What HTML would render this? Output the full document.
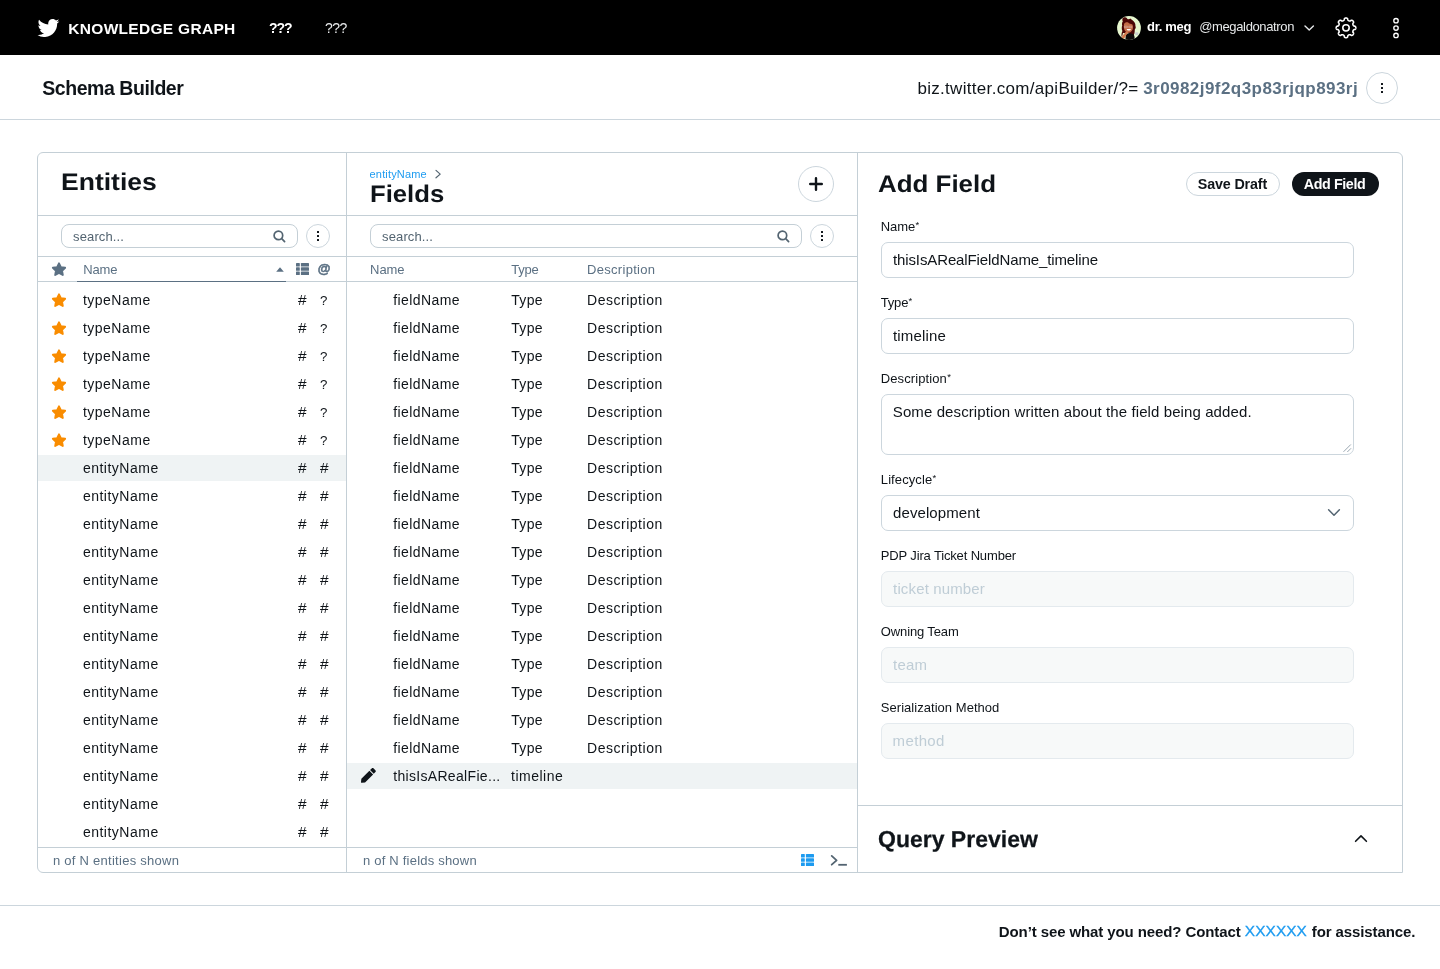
<!DOCTYPE html>
<html lang="en">
<head>
<meta charset="utf-8">
<title>Schema Builder</title>
<style>
*{box-sizing:border-box;margin:0;padding:0}
html,body{width:1440px;height:969px;overflow:hidden;background:#fff}
body{font-family:"Liberation Sans",sans-serif;color:#0f1419;position:relative}
#root{position:absolute;left:0;top:0;width:1440px;height:969px;will-change:transform}
.abs{position:absolute}
.t{position:absolute;white-space:nowrap;display:block}
#topbar{position:absolute;left:0;top:0;width:1440px;height:55px;background:#000}
#sub{position:absolute;left:0;top:55px;width:1440px;height:65px;background:#fff;border-bottom:1px solid #ccd6dd}
#panel{position:absolute;left:37px;top:152px;width:1366px;height:721px;border:1px solid #c4cfd6;border-radius:6px 6px 0 6px;background:#fff}
.hl{position:absolute;height:1px;background:#c4cfd6}
.vl{position:absolute;width:1px;background:#c4cfd6}
.hi{position:absolute;background:#eff3f4}
.inp{position:absolute;left:881px;width:473px;height:36px;border:1px solid #ccd6dd;border-radius:7px;background:#fff}
.inp.dis{background:#f7f9f9;border-color:#e4eaee}
.srch{position:absolute;height:24px;border:1px solid #c4cfd6;border-radius:8px;background:#fff}
#footer{position:absolute;left:0;top:905px;width:1440px;height:64px;border-top:1px solid #ccd6dd;background:#fff}
</style>
</head>
<body>
<div id="root">

<div id="topbar"></div>
<svg class="abs" style="left:37.2px;top:18.6px" width="22.4" height="18.5" viewBox="0.36 2.75 23.3 18.95" preserveAspectRatio="none"><path fill="#fff" d="M23.643 4.937c-.835.37-1.732.62-2.675.733.962-.576 1.7-1.49 2.048-2.578-.9.534-1.897.922-2.958 1.13-.85-.904-2.06-1.47-3.4-1.47-2.572 0-4.658 2.086-4.658 4.66 0 .364.042.718.12 1.06-3.873-.195-7.304-2.05-9.602-4.868-.4.69-.63 1.49-.63 2.342 0 1.616.823 3.043 2.072 3.878-.764-.025-1.482-.234-2.11-.583v.06c0 2.257 1.605 4.14 3.737 4.568-.392.106-.803.162-1.227.162-.3 0-.593-.028-.877-.082.593 1.85 2.313 3.198 4.352 3.234-1.595 1.25-3.604 1.995-5.786 1.995-.376 0-.747-.022-1.112-.065 2.062 1.323 4.51 2.093 7.14 2.093 8.57 0 13.255-7.098 13.255-13.254 0-.2-.005-.402-.014-.602.91-.658 1.7-1.477 2.323-2.41z"/></svg>
<span class="t" id="kg" style="left:68.30px;top:20.68px;font-size:15.5px;line-height:15.5px;font-weight:700;color:#fff;letter-spacing:0.3px;">KNOWLEDGE GRAPH</span>
<span class="t" id="q1" style="left:269.00px;top:21.35px;font-size:14px;line-height:14px;font-weight:700;color:#fff;letter-spacing:-1.0px;">???</span>
<span class="t" id="q2" style="left:325.00px;top:21.35px;font-size:14px;line-height:14px;font-weight:400;color:#e7e9ea;letter-spacing:-0.5px;">???</span>
<svg class="abs" style="left:1117px;top:16px" width="24" height="24" viewBox="0 0 24 24">
<defs><clipPath id="avc"><circle cx="12" cy="12" r="11.9"/></clipPath></defs>
<g clip-path="url(#avc)">
<rect width="24" height="24" fill="#e6f7cf"/>
<path d="M5.4 3.2 C5.2 1.6 6.8 0.9 8 1.3 C9.2 1.2 9.9 2.2 10.4 3 C11.6 3.4 12.6 3.2 13.4 2.6 C14.2 3.6 15.6 4.2 16.6 5.2 C18.2 6.6 18.6 8.6 18.4 10 C19.2 11.2 18.6 12.6 17.8 13.4 C17.8 15 17.6 16.4 17.4 17.6 L16.6 19.6 L12.2 19.6 L12 17 L6 17 C5.6 18.4 5.4 20 4.8 21 C4 19 4.8 16.6 5.4 15 C4.6 13.4 4.6 11 5.2 9.4 C4.8 8 5 6.4 5.8 5.4 C5.4 4.8 5.3 4 5.4 3.2Z" fill="#4a0606"/>
<path d="M7 8.2 C7.6 6.6 9.6 6 11.2 6.6 C12 7.6 14 8 15.4 8.4 C16.2 10 16.2 12.4 15.4 14 C14.4 15.8 12.6 16.8 11 16.6 C9 16.4 7.4 14.8 7 12.6 C6.8 11 6.8 9.4 7 8.2Z" fill="#c26c47"/>
<path d="M9.6 13 L13.9 13 C13.7 14.2 12.8 14.6 11.8 14.6 C10.8 14.6 9.8 14.2 9.6 13Z" fill="#fff"/>
<path d="M7.4 10.2 h3 v1.5 h-3z M11.8 10.2 h3 v1.5 h-3z" fill="none" stroke="#d9b7b0" stroke-width="0.55"/>
<path d="M8.4 24 L8.8 19 C9.6 17.6 11 17 12.4 17.2 L16.4 18 C17.4 19.4 17.8 21.6 17.6 24Z" fill="#0c0a09"/>
<path d="M3.6 22.4 C5 20.4 6.6 18.4 8 16.8 C8.6 15.8 9.8 15.4 10.8 15.6 L11.4 16.8 C10.4 17.4 9.6 18.4 9 19.6 C8.4 20.8 7.4 22.4 6.4 23.4Z" fill="#d27a4e"/>
<path d="M18.4 16.2 l3 0.4 l-0.4 2.6 l-2.8 -0.4z" fill="#c9cfd0"/>
</g></svg>
<span class="t" id="drmeg" style="left:1147.00px;top:20.20px;font-size:13px;line-height:13px;font-weight:700;color:#fff;letter-spacing:-0.3px;">dr. meg</span>
<span class="t" id="handle" style="left:1199.20px;top:20.20px;font-size:13px;line-height:13px;font-weight:400;color:#e7e9ea;letter-spacing:-0.36px;">@megaldonatron</span>
<svg class="abs" style="left:1303px;top:23px" width="12" height="10" viewBox="0 0 12 10" fill="none" stroke="#e7e9ea" stroke-width="1.4" stroke-linecap="round" stroke-linejoin="round"><path d="M2 3 L6.2 7 L10.4 3"/></svg>
<svg class="abs" style="left:1334px;top:16px" width="24" height="24" viewBox="0 0 24 24" fill="none" stroke="#fff" stroke-width="1.55" stroke-linejoin="round"><path d="M12.00 2.00 L12.17 2.01 L12.34 2.03 L12.51 2.06 L12.68 2.10 L12.85 2.16 L13.01 2.24 L13.17 2.33 L13.32 2.44 L13.47 2.58 L13.60 2.75 L13.71 3.04 L13.73 3.71 L13.83 3.93 L13.94 4.09 L14.05 4.22 L14.16 4.33 L14.27 4.43 L14.38 4.52 L14.49 4.61 L14.61 4.68 L14.73 4.74 L14.85 4.80 L14.97 4.85 L15.10 4.90 L15.23 4.93 L15.36 4.96 L15.50 4.99 L15.64 5.00 L15.79 5.01 L15.95 5.01 L16.12 4.99 L16.31 4.95 L16.53 4.87 L17.02 4.41 L17.30 4.28 L17.52 4.25 L17.72 4.26 L17.90 4.29 L18.08 4.34 L18.25 4.40 L18.41 4.48 L18.56 4.56 L18.70 4.66 L18.84 4.77 L18.97 4.88 L19.08 5.01 L19.19 5.15 L19.29 5.29 L19.37 5.44 L19.45 5.60 L19.51 5.77 L19.56 5.95 L19.59 6.13 L19.60 6.33 L19.57 6.55 L19.44 6.83 L18.98 7.32 L18.90 7.54 L18.86 7.73 L18.84 7.90 L18.84 8.06 L18.85 8.21 L18.86 8.35 L18.89 8.49 L18.92 8.62 L18.95 8.75 L19.00 8.88 L19.05 9.00 L19.11 9.12 L19.17 9.24 L19.24 9.36 L19.33 9.47 L19.42 9.58 L19.52 9.69 L19.63 9.80 L19.76 9.91 L19.92 10.02 L20.14 10.12 L20.81 10.14 L21.10 10.25 L21.27 10.38 L21.41 10.53 L21.52 10.68 L21.61 10.84 L21.69 11.00 L21.75 11.17 L21.79 11.34 L21.82 11.51 L21.84 11.68 L21.85 11.85 L21.84 12.02 L21.82 12.19 L21.79 12.36 L21.75 12.53 L21.69 12.70 L21.61 12.86 L21.52 13.02 L21.41 13.17 L21.27 13.32 L21.10 13.45 L20.81 13.56 L20.14 13.58 L19.92 13.68 L19.76 13.79 L19.63 13.90 L19.52 14.01 L19.42 14.12 L19.33 14.23 L19.24 14.34 L19.17 14.46 L19.11 14.58 L19.05 14.70 L19.00 14.82 L18.95 14.95 L18.92 15.08 L18.89 15.21 L18.86 15.35 L18.85 15.49 L18.84 15.64 L18.84 15.80 L18.86 15.97 L18.90 16.16 L18.98 16.38 L19.44 16.87 L19.57 17.15 L19.60 17.37 L19.59 17.57 L19.56 17.75 L19.51 17.93 L19.45 18.10 L19.37 18.26 L19.29 18.41 L19.19 18.55 L19.08 18.69 L18.97 18.82 L18.84 18.93 L18.70 19.04 L18.56 19.14 L18.41 19.22 L18.25 19.30 L18.08 19.36 L17.90 19.41 L17.72 19.44 L17.52 19.45 L17.30 19.42 L17.02 19.29 L16.53 18.83 L16.31 18.75 L16.12 18.71 L15.95 18.69 L15.79 18.69 L15.64 18.70 L15.50 18.71 L15.36 18.74 L15.23 18.77 L15.10 18.80 L14.97 18.85 L14.85 18.90 L14.73 18.96 L14.61 19.02 L14.49 19.09 L14.38 19.18 L14.27 19.27 L14.16 19.37 L14.05 19.48 L13.94 19.61 L13.83 19.77 L13.73 19.99 L13.71 20.66 L13.60 20.95 L13.47 21.12 L13.32 21.26 L13.17 21.37 L13.01 21.46 L12.85 21.54 L12.68 21.60 L12.51 21.64 L12.34 21.67 L12.17 21.69 L12.00 21.70 L11.83 21.69 L11.66 21.67 L11.49 21.64 L11.32 21.60 L11.15 21.54 L10.99 21.46 L10.83 21.37 L10.68 21.26 L10.53 21.12 L10.40 20.95 L10.29 20.66 L10.27 19.99 L10.17 19.77 L10.06 19.61 L9.95 19.48 L9.84 19.37 L9.73 19.27 L9.62 19.18 L9.51 19.09 L9.39 19.02 L9.27 18.96 L9.15 18.90 L9.03 18.85 L8.90 18.80 L8.77 18.77 L8.64 18.74 L8.50 18.71 L8.36 18.70 L8.21 18.69 L8.05 18.69 L7.88 18.71 L7.69 18.75 L7.47 18.83 L6.98 19.29 L6.70 19.42 L6.48 19.45 L6.28 19.44 L6.10 19.41 L5.92 19.36 L5.75 19.30 L5.59 19.22 L5.44 19.14 L5.30 19.04 L5.16 18.93 L5.03 18.82 L4.92 18.69 L4.81 18.55 L4.71 18.41 L4.63 18.26 L4.55 18.10 L4.49 17.93 L4.44 17.75 L4.41 17.57 L4.40 17.37 L4.43 17.15 L4.56 16.87 L5.02 16.38 L5.10 16.16 L5.14 15.97 L5.16 15.80 L5.16 15.64 L5.15 15.49 L5.14 15.35 L5.11 15.21 L5.08 15.08 L5.05 14.95 L5.00 14.82 L4.95 14.70 L4.89 14.58 L4.83 14.46 L4.76 14.34 L4.67 14.23 L4.58 14.12 L4.48 14.01 L4.37 13.90 L4.24 13.79 L4.08 13.68 L3.86 13.58 L3.19 13.56 L2.90 13.45 L2.73 13.32 L2.59 13.17 L2.48 13.02 L2.39 12.86 L2.31 12.70 L2.25 12.53 L2.21 12.36 L2.18 12.19 L2.16 12.02 L2.15 11.85 L2.16 11.68 L2.18 11.51 L2.21 11.34 L2.25 11.17 L2.31 11.00 L2.39 10.84 L2.48 10.68 L2.59 10.53 L2.73 10.38 L2.90 10.25 L3.19 10.14 L3.86 10.12 L4.08 10.02 L4.24 9.91 L4.37 9.80 L4.48 9.69 L4.58 9.58 L4.67 9.47 L4.76 9.36 L4.83 9.24 L4.89 9.12 L4.95 9.00 L5.00 8.88 L5.05 8.75 L5.08 8.62 L5.11 8.49 L5.14 8.35 L5.15 8.21 L5.16 8.06 L5.16 7.90 L5.14 7.73 L5.10 7.54 L5.02 7.32 L4.56 6.83 L4.43 6.55 L4.40 6.33 L4.41 6.13 L4.44 5.95 L4.49 5.77 L4.55 5.60 L4.63 5.44 L4.71 5.29 L4.81 5.15 L4.92 5.01 L5.03 4.88 L5.16 4.77 L5.30 4.66 L5.44 4.56 L5.59 4.48 L5.75 4.40 L5.92 4.34 L6.10 4.29 L6.28 4.26 L6.48 4.25 L6.70 4.28 L6.98 4.41 L7.47 4.87 L7.69 4.95 L7.88 4.99 L8.05 5.01 L8.21 5.01 L8.36 5.00 L8.50 4.99 L8.64 4.96 L8.77 4.93 L8.90 4.90 L9.03 4.85 L9.15 4.80 L9.27 4.74 L9.39 4.68 L9.51 4.61 L9.62 4.52 L9.73 4.43 L9.84 4.33 L9.95 4.22 L10.06 4.09 L10.17 3.93 L10.27 3.71 L10.29 3.04 L10.40 2.75 L10.53 2.58 L10.68 2.44 L10.83 2.33 L10.99 2.24 L11.15 2.16 L11.32 2.10 L11.49 2.06 L11.66 2.03 L11.83 2.01Z"/><circle cx="12" cy="11.85" r="3.2"/></svg>
<svg class="abs" style="left:1391px;top:16px" width="10" height="24" viewBox="0 0 10 24" fill="none" stroke="#fff" stroke-width="1.35"><circle cx="5" cy="4.7" r="2.2"/><circle cx="5" cy="12" r="2.2"/><circle cx="5" cy="19.4" r="2.2"/></svg>
<div id="sub"></div>
<span class="t" id="sb" style="left:42.20px;top:78.89px;font-size:19.5px;line-height:19.5px;font-weight:700;color:#0f1419;letter-spacing:-0.44px;">Schema Builder</span>
<span class="t" id="url" style="left:917.40px;top:79.61px;font-size:17px;line-height:17px;font-weight:400;color:#0f1419;letter-spacing:0.31px;">biz.twitter.com/apiBuilder/?=</span>
<span class="t" id="hash" style="left:1143.20px;top:79.61px;font-size:17px;line-height:17px;font-weight:700;color:#5b7083;letter-spacing:0.45px;">3r0982j9f2q3p83rjqp893rj</span>
<div class="abs" style="left:1366.0px;top:72.0px;width:32px;height:32px;border:1px solid #ccd6dd;border-radius:50%"></div><svg class="abs" style="left:1380px;top:82px" width="4" height="12" viewBox="0 0 4 12" fill="#0f1419"><rect x="1" y="1" width="2" height="2" rx="0.3"/><rect x="1" y="5" width="2" height="2" rx="0.3"/><rect x="1" y="9" width="2" height="2" rx="0.3"/></svg>
<div id="panel"></div>
<div class="vl" style="left:346px;top:153px;height:719px"></div>
<div class="vl" style="left:857px;top:153px;height:719px"></div>
<div class="hl" style="left:38px;top:215px;width:819px"></div>
<div class="hl" style="left:38px;top:256px;width:819px"></div>
<div class="hl" style="left:38px;top:281px;width:819px"></div>
<div class="hl" style="left:38px;top:847px;width:819px"></div>
<div class="hl" style="left:858px;top:805px;width:544px"></div>
<div class="hl" style="left:77px;top:281px;width:209px;background:#5b7083"></div>
<span class="t" id="ent" style="left:61.30px;top:169.88px;font-size:24px;line-height:24px;font-weight:700;color:#0f1419;letter-spacing:0px;transform-origin:0 20.32px;transform:scaleX(1.105) rotate(0.03deg)">Entities</span>
<div class="srch" style="left:61px;top:224px;width:237px"></div>
<span class="t" id="s1" style="left:73.00px;top:229.50px;font-size:13px;line-height:13px;font-weight:400;color:#536471;letter-spacing:0.14px;">search...</span>
<svg class="abs" style="left:273.3px;top:229.8px" width="13" height="13" viewBox="0 0 13 13" fill="none" stroke="#536471" stroke-width="1.7" stroke-linecap="round"><circle cx="5.4" cy="5.4" r="4.3"/><path d="M8.7 8.7 L11.6 11.6"/></svg>
<div class="abs" style="left:306.0px;top:224.0px;width:24px;height:24px;border:1px solid #ccd6dd;border-radius:50%"></div><svg class="abs" style="left:316px;top:230px" width="4" height="12" viewBox="0 0 4 12" fill="#0f1419"><rect x="1" y="1" width="2" height="2" rx="0.3"/><rect x="1" y="5" width="2" height="2" rx="0.3"/><rect x="1" y="9" width="2" height="2" rx="0.3"/></svg>
<svg class="abs" style="left:50.2px;top:260.2px" width="18" height="18" viewBox="-9 -9 18 18"><path d="M0.00 -5.70 L1.88 -1.84 L6.13 -1.24 L3.04 1.74 L3.79 5.97 L0.00 3.95 L-3.79 5.97 L-3.04 1.74 L-6.13 -1.24 L-1.88 -1.84Z" fill="#5b7083" stroke="#5b7083" stroke-width="1.9" stroke-linejoin="round"/></svg>
<span class="t" id="hn1" style="left:83.20px;top:263.00px;font-size:13px;line-height:13px;font-weight:400;color:#5b7083;letter-spacing:-0.1px;">Name</span>
<svg class="abs" style="left:276px;top:267px" width="8" height="5" viewBox="0 0 8 5"><path d="M0.2 4.7 L4 0.3 L7.8 4.7Z" fill="#5b7083"/></svg>
<svg class="abs" style="left:296px;top:263px" width="13" height="12" viewBox="0 0 13 12" fill="#5b7083"><rect x="0" y="0" width="3.8" height="3.5" rx="0.6"/><rect x="4.9" y="0" width="8.1" height="3.5" rx="0.6"/><rect x="0" y="4.25" width="3.8" height="3.5" rx="0.6"/><rect x="4.9" y="4.25" width="8.1" height="3.5" rx="0.6"/><rect x="0" y="8.5" width="3.8" height="3.5" rx="0.6"/><rect x="4.9" y="8.5" width="8.1" height="3.5" rx="0.6"/></svg>
<span class="t" id="at" style="left:317.70px;top:262.20px;font-size:13px;line-height:13px;font-weight:700;color:#5b7083;letter-spacing:0px;-webkit-text-stroke:0.55px #5b7083">@</span>
<div class="hi" style="left:38px;top:455px;width:308px;height:26px"></div>
<svg class="abs" style="left:50px;top:290.9px" width="18" height="18" viewBox="-9 -9 18 18"><path d="M0.00 -5.70 L1.88 -1.84 L6.13 -1.24 L3.04 1.74 L3.79 5.97 L0.00 3.95 L-3.79 5.97 L-3.04 1.74 L-6.13 -1.24 L-1.88 -1.84Z" fill="#f98c00" stroke="#f98c00" stroke-width="1.9" stroke-linejoin="round"/></svg>
<span class="t" id="e0" style="left:82.90px;top:292.95px;font-size:14px;line-height:14px;font-weight:400;color:#0f1419;letter-spacing:0.5px;">typeName</span>
<span class="t" id="eh0" style="left:298.10px;top:292.95px;font-size:14px;line-height:14px;font-weight:400;color:#0f1419;letter-spacing:0px;transform-origin:0 0;transform:scaleX(1.1)">#</span>
<span class="t" id="eq0" style="left:319.90px;top:293.54px;font-size:13.3px;line-height:13.3px;font-weight:400;color:#0f1419;letter-spacing:0px;">?</span>
<svg class="abs" style="left:50px;top:318.9px" width="18" height="18" viewBox="-9 -9 18 18"><path d="M0.00 -5.70 L1.88 -1.84 L6.13 -1.24 L3.04 1.74 L3.79 5.97 L0.00 3.95 L-3.79 5.97 L-3.04 1.74 L-6.13 -1.24 L-1.88 -1.84Z" fill="#f98c00" stroke="#f98c00" stroke-width="1.9" stroke-linejoin="round"/></svg>
<span class="t" id="e1" style="left:82.90px;top:320.95px;font-size:14px;line-height:14px;font-weight:400;color:#0f1419;letter-spacing:0.5px;">typeName</span>
<span class="t" id="eh1" style="left:298.10px;top:320.95px;font-size:14px;line-height:14px;font-weight:400;color:#0f1419;letter-spacing:0px;transform-origin:0 0;transform:scaleX(1.1)">#</span>
<span class="t" id="eq1" style="left:319.90px;top:321.54px;font-size:13.3px;line-height:13.3px;font-weight:400;color:#0f1419;letter-spacing:0px;">?</span>
<svg class="abs" style="left:50px;top:346.9px" width="18" height="18" viewBox="-9 -9 18 18"><path d="M0.00 -5.70 L1.88 -1.84 L6.13 -1.24 L3.04 1.74 L3.79 5.97 L0.00 3.95 L-3.79 5.97 L-3.04 1.74 L-6.13 -1.24 L-1.88 -1.84Z" fill="#f98c00" stroke="#f98c00" stroke-width="1.9" stroke-linejoin="round"/></svg>
<span class="t" id="e2" style="left:82.90px;top:348.95px;font-size:14px;line-height:14px;font-weight:400;color:#0f1419;letter-spacing:0.5px;">typeName</span>
<span class="t" id="eh2" style="left:298.10px;top:348.95px;font-size:14px;line-height:14px;font-weight:400;color:#0f1419;letter-spacing:0px;transform-origin:0 0;transform:scaleX(1.1)">#</span>
<span class="t" id="eq2" style="left:319.90px;top:349.54px;font-size:13.3px;line-height:13.3px;font-weight:400;color:#0f1419;letter-spacing:0px;">?</span>
<svg class="abs" style="left:50px;top:374.9px" width="18" height="18" viewBox="-9 -9 18 18"><path d="M0.00 -5.70 L1.88 -1.84 L6.13 -1.24 L3.04 1.74 L3.79 5.97 L0.00 3.95 L-3.79 5.97 L-3.04 1.74 L-6.13 -1.24 L-1.88 -1.84Z" fill="#f98c00" stroke="#f98c00" stroke-width="1.9" stroke-linejoin="round"/></svg>
<span class="t" id="e3" style="left:82.90px;top:376.95px;font-size:14px;line-height:14px;font-weight:400;color:#0f1419;letter-spacing:0.5px;">typeName</span>
<span class="t" id="eh3" style="left:298.10px;top:376.95px;font-size:14px;line-height:14px;font-weight:400;color:#0f1419;letter-spacing:0px;transform-origin:0 0;transform:scaleX(1.1)">#</span>
<span class="t" id="eq3" style="left:319.90px;top:377.54px;font-size:13.3px;line-height:13.3px;font-weight:400;color:#0f1419;letter-spacing:0px;">?</span>
<svg class="abs" style="left:50px;top:402.9px" width="18" height="18" viewBox="-9 -9 18 18"><path d="M0.00 -5.70 L1.88 -1.84 L6.13 -1.24 L3.04 1.74 L3.79 5.97 L0.00 3.95 L-3.79 5.97 L-3.04 1.74 L-6.13 -1.24 L-1.88 -1.84Z" fill="#f98c00" stroke="#f98c00" stroke-width="1.9" stroke-linejoin="round"/></svg>
<span class="t" id="e4" style="left:82.90px;top:404.95px;font-size:14px;line-height:14px;font-weight:400;color:#0f1419;letter-spacing:0.5px;">typeName</span>
<span class="t" id="eh4" style="left:298.10px;top:404.95px;font-size:14px;line-height:14px;font-weight:400;color:#0f1419;letter-spacing:0px;transform-origin:0 0;transform:scaleX(1.1)">#</span>
<span class="t" id="eq4" style="left:319.90px;top:405.54px;font-size:13.3px;line-height:13.3px;font-weight:400;color:#0f1419;letter-spacing:0px;">?</span>
<svg class="abs" style="left:50px;top:430.9px" width="18" height="18" viewBox="-9 -9 18 18"><path d="M0.00 -5.70 L1.88 -1.84 L6.13 -1.24 L3.04 1.74 L3.79 5.97 L0.00 3.95 L-3.79 5.97 L-3.04 1.74 L-6.13 -1.24 L-1.88 -1.84Z" fill="#f98c00" stroke="#f98c00" stroke-width="1.9" stroke-linejoin="round"/></svg>
<span class="t" id="e5" style="left:82.90px;top:432.95px;font-size:14px;line-height:14px;font-weight:400;color:#0f1419;letter-spacing:0.5px;">typeName</span>
<span class="t" id="eh5" style="left:298.10px;top:432.95px;font-size:14px;line-height:14px;font-weight:400;color:#0f1419;letter-spacing:0px;transform-origin:0 0;transform:scaleX(1.1)">#</span>
<span class="t" id="eq5" style="left:319.90px;top:433.54px;font-size:13.3px;line-height:13.3px;font-weight:400;color:#0f1419;letter-spacing:0px;">?</span>
<span class="t" id="e6" style="left:82.90px;top:460.95px;font-size:14px;line-height:14px;font-weight:400;color:#0f1419;letter-spacing:0.5px;">entityName</span>
<span class="t" id="eh6" style="left:298.10px;top:460.95px;font-size:14px;line-height:14px;font-weight:400;color:#0f1419;letter-spacing:0px;transform-origin:0 0;transform:scaleX(1.1)">#</span>
<span class="t" id="eq6" style="left:320.20px;top:460.95px;font-size:14px;line-height:14px;font-weight:400;color:#0f1419;letter-spacing:0px;transform-origin:0 0;transform:scaleX(1.1)">#</span>
<span class="t" id="e7" style="left:82.90px;top:488.95px;font-size:14px;line-height:14px;font-weight:400;color:#0f1419;letter-spacing:0.5px;">entityName</span>
<span class="t" id="eh7" style="left:298.10px;top:488.95px;font-size:14px;line-height:14px;font-weight:400;color:#0f1419;letter-spacing:0px;transform-origin:0 0;transform:scaleX(1.1)">#</span>
<span class="t" id="eq7" style="left:320.20px;top:488.95px;font-size:14px;line-height:14px;font-weight:400;color:#0f1419;letter-spacing:0px;transform-origin:0 0;transform:scaleX(1.1)">#</span>
<span class="t" id="e8" style="left:82.90px;top:516.95px;font-size:14px;line-height:14px;font-weight:400;color:#0f1419;letter-spacing:0.5px;">entityName</span>
<span class="t" id="eh8" style="left:298.10px;top:516.95px;font-size:14px;line-height:14px;font-weight:400;color:#0f1419;letter-spacing:0px;transform-origin:0 0;transform:scaleX(1.1)">#</span>
<span class="t" id="eq8" style="left:320.20px;top:516.95px;font-size:14px;line-height:14px;font-weight:400;color:#0f1419;letter-spacing:0px;transform-origin:0 0;transform:scaleX(1.1)">#</span>
<span class="t" id="e9" style="left:82.90px;top:544.95px;font-size:14px;line-height:14px;font-weight:400;color:#0f1419;letter-spacing:0.5px;">entityName</span>
<span class="t" id="eh9" style="left:298.10px;top:544.95px;font-size:14px;line-height:14px;font-weight:400;color:#0f1419;letter-spacing:0px;transform-origin:0 0;transform:scaleX(1.1)">#</span>
<span class="t" id="eq9" style="left:320.20px;top:544.95px;font-size:14px;line-height:14px;font-weight:400;color:#0f1419;letter-spacing:0px;transform-origin:0 0;transform:scaleX(1.1)">#</span>
<span class="t" id="e10" style="left:82.90px;top:572.95px;font-size:14px;line-height:14px;font-weight:400;color:#0f1419;letter-spacing:0.5px;">entityName</span>
<span class="t" id="eh10" style="left:298.10px;top:572.95px;font-size:14px;line-height:14px;font-weight:400;color:#0f1419;letter-spacing:0px;transform-origin:0 0;transform:scaleX(1.1)">#</span>
<span class="t" id="eq10" style="left:320.20px;top:572.95px;font-size:14px;line-height:14px;font-weight:400;color:#0f1419;letter-spacing:0px;transform-origin:0 0;transform:scaleX(1.1)">#</span>
<span class="t" id="e11" style="left:82.90px;top:600.95px;font-size:14px;line-height:14px;font-weight:400;color:#0f1419;letter-spacing:0.5px;">entityName</span>
<span class="t" id="eh11" style="left:298.10px;top:600.95px;font-size:14px;line-height:14px;font-weight:400;color:#0f1419;letter-spacing:0px;transform-origin:0 0;transform:scaleX(1.1)">#</span>
<span class="t" id="eq11" style="left:320.20px;top:600.95px;font-size:14px;line-height:14px;font-weight:400;color:#0f1419;letter-spacing:0px;transform-origin:0 0;transform:scaleX(1.1)">#</span>
<span class="t" id="e12" style="left:82.90px;top:628.95px;font-size:14px;line-height:14px;font-weight:400;color:#0f1419;letter-spacing:0.5px;">entityName</span>
<span class="t" id="eh12" style="left:298.10px;top:628.95px;font-size:14px;line-height:14px;font-weight:400;color:#0f1419;letter-spacing:0px;transform-origin:0 0;transform:scaleX(1.1)">#</span>
<span class="t" id="eq12" style="left:320.20px;top:628.95px;font-size:14px;line-height:14px;font-weight:400;color:#0f1419;letter-spacing:0px;transform-origin:0 0;transform:scaleX(1.1)">#</span>
<span class="t" id="e13" style="left:82.90px;top:656.95px;font-size:14px;line-height:14px;font-weight:400;color:#0f1419;letter-spacing:0.5px;">entityName</span>
<span class="t" id="eh13" style="left:298.10px;top:656.95px;font-size:14px;line-height:14px;font-weight:400;color:#0f1419;letter-spacing:0px;transform-origin:0 0;transform:scaleX(1.1)">#</span>
<span class="t" id="eq13" style="left:320.20px;top:656.95px;font-size:14px;line-height:14px;font-weight:400;color:#0f1419;letter-spacing:0px;transform-origin:0 0;transform:scaleX(1.1)">#</span>
<span class="t" id="e14" style="left:82.90px;top:684.95px;font-size:14px;line-height:14px;font-weight:400;color:#0f1419;letter-spacing:0.5px;">entityName</span>
<span class="t" id="eh14" style="left:298.10px;top:684.95px;font-size:14px;line-height:14px;font-weight:400;color:#0f1419;letter-spacing:0px;transform-origin:0 0;transform:scaleX(1.1)">#</span>
<span class="t" id="eq14" style="left:320.20px;top:684.95px;font-size:14px;line-height:14px;font-weight:400;color:#0f1419;letter-spacing:0px;transform-origin:0 0;transform:scaleX(1.1)">#</span>
<span class="t" id="e15" style="left:82.90px;top:712.95px;font-size:14px;line-height:14px;font-weight:400;color:#0f1419;letter-spacing:0.5px;">entityName</span>
<span class="t" id="eh15" style="left:298.10px;top:712.95px;font-size:14px;line-height:14px;font-weight:400;color:#0f1419;letter-spacing:0px;transform-origin:0 0;transform:scaleX(1.1)">#</span>
<span class="t" id="eq15" style="left:320.20px;top:712.95px;font-size:14px;line-height:14px;font-weight:400;color:#0f1419;letter-spacing:0px;transform-origin:0 0;transform:scaleX(1.1)">#</span>
<span class="t" id="e16" style="left:82.90px;top:740.95px;font-size:14px;line-height:14px;font-weight:400;color:#0f1419;letter-spacing:0.5px;">entityName</span>
<span class="t" id="eh16" style="left:298.10px;top:740.95px;font-size:14px;line-height:14px;font-weight:400;color:#0f1419;letter-spacing:0px;transform-origin:0 0;transform:scaleX(1.1)">#</span>
<span class="t" id="eq16" style="left:320.20px;top:740.95px;font-size:14px;line-height:14px;font-weight:400;color:#0f1419;letter-spacing:0px;transform-origin:0 0;transform:scaleX(1.1)">#</span>
<span class="t" id="e17" style="left:82.90px;top:768.95px;font-size:14px;line-height:14px;font-weight:400;color:#0f1419;letter-spacing:0.5px;">entityName</span>
<span class="t" id="eh17" style="left:298.10px;top:768.95px;font-size:14px;line-height:14px;font-weight:400;color:#0f1419;letter-spacing:0px;transform-origin:0 0;transform:scaleX(1.1)">#</span>
<span class="t" id="eq17" style="left:320.20px;top:768.95px;font-size:14px;line-height:14px;font-weight:400;color:#0f1419;letter-spacing:0px;transform-origin:0 0;transform:scaleX(1.1)">#</span>
<span class="t" id="e18" style="left:82.90px;top:796.95px;font-size:14px;line-height:14px;font-weight:400;color:#0f1419;letter-spacing:0.5px;">entityName</span>
<span class="t" id="eh18" style="left:298.10px;top:796.95px;font-size:14px;line-height:14px;font-weight:400;color:#0f1419;letter-spacing:0px;transform-origin:0 0;transform:scaleX(1.1)">#</span>
<span class="t" id="eq18" style="left:320.20px;top:796.95px;font-size:14px;line-height:14px;font-weight:400;color:#0f1419;letter-spacing:0px;transform-origin:0 0;transform:scaleX(1.1)">#</span>
<span class="t" id="e19" style="left:82.90px;top:824.95px;font-size:14px;line-height:14px;font-weight:400;color:#0f1419;letter-spacing:0.5px;">entityName</span>
<span class="t" id="eh19" style="left:298.10px;top:824.95px;font-size:14px;line-height:14px;font-weight:400;color:#0f1419;letter-spacing:0px;transform-origin:0 0;transform:scaleX(1.1)">#</span>
<span class="t" id="eq19" style="left:320.20px;top:824.95px;font-size:14px;line-height:14px;font-weight:400;color:#0f1419;letter-spacing:0px;transform-origin:0 0;transform:scaleX(1.1)">#</span>
<span class="t" id="ef" style="left:53.00px;top:853.80px;font-size:13px;line-height:13px;font-weight:400;color:#5b7083;letter-spacing:0.26px;">n of N entities shown</span>
<span class="t" id="bc" style="left:369.60px;top:168.59px;font-size:11px;line-height:11px;font-weight:400;color:#1d9bf0;letter-spacing:0.16px;">entityName</span>
<svg class="abs" style="left:434px;top:169px" width="8" height="10" viewBox="0 0 8 10" fill="none" stroke="#536471" stroke-width="1.2" stroke-linecap="round" stroke-linejoin="round"><path d="M2 1.4 L6.2 5.1 L2 8.8"/></svg>
<span class="t" id="fld" style="left:370.00px;top:181.98px;font-size:24px;line-height:24px;font-weight:700;color:#0f1419;letter-spacing:0px;transform-origin:0 20.32px;transform:scaleX(1.07) rotate(0.03deg)">Fields</span>
<div class="abs" style="left:798px;top:166px;width:36px;height:36px;border:1px solid #ccd6dd;border-radius:50%"></div>
<svg class="abs" style="left:808px;top:176px" width="16" height="16" viewBox="0 0 16 16" fill="none" stroke="#0f1419" stroke-width="2.4" stroke-linecap="round"><path d="M8 2.2 V13.8 M2.2 8 H13.8"/></svg>
<div class="srch" style="left:370px;top:224px;width:432px"></div>
<span class="t" id="s2" style="left:382.00px;top:229.50px;font-size:13px;line-height:13px;font-weight:400;color:#536471;letter-spacing:0.14px;">search...</span>
<svg class="abs" style="left:777px;top:229.8px" width="13" height="13" viewBox="0 0 13 13" fill="none" stroke="#536471" stroke-width="1.7" stroke-linecap="round"><circle cx="5.4" cy="5.4" r="4.3"/><path d="M8.7 8.7 L11.6 11.6"/></svg>
<div class="abs" style="left:810.0px;top:224.0px;width:24px;height:24px;border:1px solid #ccd6dd;border-radius:50%"></div><svg class="abs" style="left:820px;top:230px" width="4" height="12" viewBox="0 0 4 12" fill="#0f1419"><rect x="1" y="1" width="2" height="2" rx="0.3"/><rect x="1" y="5" width="2" height="2" rx="0.3"/><rect x="1" y="9" width="2" height="2" rx="0.3"/></svg>
<span class="t" id="hn2" style="left:370.10px;top:263.00px;font-size:13px;line-height:13px;font-weight:400;color:#5b7083;letter-spacing:-0.1px;">Name</span>
<span class="t" id="ht2" style="left:511.20px;top:263.00px;font-size:13px;line-height:13px;font-weight:400;color:#5b7083;letter-spacing:-0.2px;">Type</span>
<span class="t" id="hd2" style="left:587.00px;top:263.00px;font-size:13px;line-height:13px;font-weight:400;color:#5b7083;letter-spacing:0.3px;">Description</span>
<span class="t" id="f0" style="left:393.20px;top:292.95px;font-size:14px;line-height:14px;font-weight:400;color:#0f1419;letter-spacing:0.42px;">fieldName</span>
<span class="t" id="ft0" style="left:511.20px;top:292.95px;font-size:14px;line-height:14px;font-weight:400;color:#0f1419;letter-spacing:0.35px;">Type</span>
<span class="t" id="fd0" style="left:587.00px;top:292.95px;font-size:14px;line-height:14px;font-weight:400;color:#0f1419;letter-spacing:0.52px;">Description</span>
<span class="t" id="f1" style="left:393.20px;top:320.95px;font-size:14px;line-height:14px;font-weight:400;color:#0f1419;letter-spacing:0.42px;">fieldName</span>
<span class="t" id="ft1" style="left:511.20px;top:320.95px;font-size:14px;line-height:14px;font-weight:400;color:#0f1419;letter-spacing:0.35px;">Type</span>
<span class="t" id="fd1" style="left:587.00px;top:320.95px;font-size:14px;line-height:14px;font-weight:400;color:#0f1419;letter-spacing:0.52px;">Description</span>
<span class="t" id="f2" style="left:393.20px;top:348.95px;font-size:14px;line-height:14px;font-weight:400;color:#0f1419;letter-spacing:0.42px;">fieldName</span>
<span class="t" id="ft2" style="left:511.20px;top:348.95px;font-size:14px;line-height:14px;font-weight:400;color:#0f1419;letter-spacing:0.35px;">Type</span>
<span class="t" id="fd2" style="left:587.00px;top:348.95px;font-size:14px;line-height:14px;font-weight:400;color:#0f1419;letter-spacing:0.52px;">Description</span>
<span class="t" id="f3" style="left:393.20px;top:376.95px;font-size:14px;line-height:14px;font-weight:400;color:#0f1419;letter-spacing:0.42px;">fieldName</span>
<span class="t" id="ft3" style="left:511.20px;top:376.95px;font-size:14px;line-height:14px;font-weight:400;color:#0f1419;letter-spacing:0.35px;">Type</span>
<span class="t" id="fd3" style="left:587.00px;top:376.95px;font-size:14px;line-height:14px;font-weight:400;color:#0f1419;letter-spacing:0.52px;">Description</span>
<span class="t" id="f4" style="left:393.20px;top:404.95px;font-size:14px;line-height:14px;font-weight:400;color:#0f1419;letter-spacing:0.42px;">fieldName</span>
<span class="t" id="ft4" style="left:511.20px;top:404.95px;font-size:14px;line-height:14px;font-weight:400;color:#0f1419;letter-spacing:0.35px;">Type</span>
<span class="t" id="fd4" style="left:587.00px;top:404.95px;font-size:14px;line-height:14px;font-weight:400;color:#0f1419;letter-spacing:0.52px;">Description</span>
<span class="t" id="f5" style="left:393.20px;top:432.95px;font-size:14px;line-height:14px;font-weight:400;color:#0f1419;letter-spacing:0.42px;">fieldName</span>
<span class="t" id="ft5" style="left:511.20px;top:432.95px;font-size:14px;line-height:14px;font-weight:400;color:#0f1419;letter-spacing:0.35px;">Type</span>
<span class="t" id="fd5" style="left:587.00px;top:432.95px;font-size:14px;line-height:14px;font-weight:400;color:#0f1419;letter-spacing:0.52px;">Description</span>
<span class="t" id="f6" style="left:393.20px;top:460.95px;font-size:14px;line-height:14px;font-weight:400;color:#0f1419;letter-spacing:0.42px;">fieldName</span>
<span class="t" id="ft6" style="left:511.20px;top:460.95px;font-size:14px;line-height:14px;font-weight:400;color:#0f1419;letter-spacing:0.35px;">Type</span>
<span class="t" id="fd6" style="left:587.00px;top:460.95px;font-size:14px;line-height:14px;font-weight:400;color:#0f1419;letter-spacing:0.52px;">Description</span>
<span class="t" id="f7" style="left:393.20px;top:488.95px;font-size:14px;line-height:14px;font-weight:400;color:#0f1419;letter-spacing:0.42px;">fieldName</span>
<span class="t" id="ft7" style="left:511.20px;top:488.95px;font-size:14px;line-height:14px;font-weight:400;color:#0f1419;letter-spacing:0.35px;">Type</span>
<span class="t" id="fd7" style="left:587.00px;top:488.95px;font-size:14px;line-height:14px;font-weight:400;color:#0f1419;letter-spacing:0.52px;">Description</span>
<span class="t" id="f8" style="left:393.20px;top:516.95px;font-size:14px;line-height:14px;font-weight:400;color:#0f1419;letter-spacing:0.42px;">fieldName</span>
<span class="t" id="ft8" style="left:511.20px;top:516.95px;font-size:14px;line-height:14px;font-weight:400;color:#0f1419;letter-spacing:0.35px;">Type</span>
<span class="t" id="fd8" style="left:587.00px;top:516.95px;font-size:14px;line-height:14px;font-weight:400;color:#0f1419;letter-spacing:0.52px;">Description</span>
<span class="t" id="f9" style="left:393.20px;top:544.95px;font-size:14px;line-height:14px;font-weight:400;color:#0f1419;letter-spacing:0.42px;">fieldName</span>
<span class="t" id="ft9" style="left:511.20px;top:544.95px;font-size:14px;line-height:14px;font-weight:400;color:#0f1419;letter-spacing:0.35px;">Type</span>
<span class="t" id="fd9" style="left:587.00px;top:544.95px;font-size:14px;line-height:14px;font-weight:400;color:#0f1419;letter-spacing:0.52px;">Description</span>
<span class="t" id="f10" style="left:393.20px;top:572.95px;font-size:14px;line-height:14px;font-weight:400;color:#0f1419;letter-spacing:0.42px;">fieldName</span>
<span class="t" id="ft10" style="left:511.20px;top:572.95px;font-size:14px;line-height:14px;font-weight:400;color:#0f1419;letter-spacing:0.35px;">Type</span>
<span class="t" id="fd10" style="left:587.00px;top:572.95px;font-size:14px;line-height:14px;font-weight:400;color:#0f1419;letter-spacing:0.52px;">Description</span>
<span class="t" id="f11" style="left:393.20px;top:600.95px;font-size:14px;line-height:14px;font-weight:400;color:#0f1419;letter-spacing:0.42px;">fieldName</span>
<span class="t" id="ft11" style="left:511.20px;top:600.95px;font-size:14px;line-height:14px;font-weight:400;color:#0f1419;letter-spacing:0.35px;">Type</span>
<span class="t" id="fd11" style="left:587.00px;top:600.95px;font-size:14px;line-height:14px;font-weight:400;color:#0f1419;letter-spacing:0.52px;">Description</span>
<span class="t" id="f12" style="left:393.20px;top:628.95px;font-size:14px;line-height:14px;font-weight:400;color:#0f1419;letter-spacing:0.42px;">fieldName</span>
<span class="t" id="ft12" style="left:511.20px;top:628.95px;font-size:14px;line-height:14px;font-weight:400;color:#0f1419;letter-spacing:0.35px;">Type</span>
<span class="t" id="fd12" style="left:587.00px;top:628.95px;font-size:14px;line-height:14px;font-weight:400;color:#0f1419;letter-spacing:0.52px;">Description</span>
<span class="t" id="f13" style="left:393.20px;top:656.95px;font-size:14px;line-height:14px;font-weight:400;color:#0f1419;letter-spacing:0.42px;">fieldName</span>
<span class="t" id="ft13" style="left:511.20px;top:656.95px;font-size:14px;line-height:14px;font-weight:400;color:#0f1419;letter-spacing:0.35px;">Type</span>
<span class="t" id="fd13" style="left:587.00px;top:656.95px;font-size:14px;line-height:14px;font-weight:400;color:#0f1419;letter-spacing:0.52px;">Description</span>
<span class="t" id="f14" style="left:393.20px;top:684.95px;font-size:14px;line-height:14px;font-weight:400;color:#0f1419;letter-spacing:0.42px;">fieldName</span>
<span class="t" id="ft14" style="left:511.20px;top:684.95px;font-size:14px;line-height:14px;font-weight:400;color:#0f1419;letter-spacing:0.35px;">Type</span>
<span class="t" id="fd14" style="left:587.00px;top:684.95px;font-size:14px;line-height:14px;font-weight:400;color:#0f1419;letter-spacing:0.52px;">Description</span>
<span class="t" id="f15" style="left:393.20px;top:712.95px;font-size:14px;line-height:14px;font-weight:400;color:#0f1419;letter-spacing:0.42px;">fieldName</span>
<span class="t" id="ft15" style="left:511.20px;top:712.95px;font-size:14px;line-height:14px;font-weight:400;color:#0f1419;letter-spacing:0.35px;">Type</span>
<span class="t" id="fd15" style="left:587.00px;top:712.95px;font-size:14px;line-height:14px;font-weight:400;color:#0f1419;letter-spacing:0.52px;">Description</span>
<span class="t" id="f16" style="left:393.20px;top:740.95px;font-size:14px;line-height:14px;font-weight:400;color:#0f1419;letter-spacing:0.42px;">fieldName</span>
<span class="t" id="ft16" style="left:511.20px;top:740.95px;font-size:14px;line-height:14px;font-weight:400;color:#0f1419;letter-spacing:0.35px;">Type</span>
<span class="t" id="fd16" style="left:587.00px;top:740.95px;font-size:14px;line-height:14px;font-weight:400;color:#0f1419;letter-spacing:0.52px;">Description</span>
<div class="hi" style="left:347px;top:763px;width:510px;height:26px"></div>
<svg class="abs" style="left:360.8px;top:768.4px" width="14.8" height="14.8" viewBox="0 0 512 512" fill="#0f1419"><path d="M290.74 93.24l128.02 128.02-277.99 277.99-114.14 12.6C11.35 513.54-1.56 500.62.14 485.34l12.7-114.22 277.9-277.88zm207.2-19.06l-60.11-60.11c-18.75-18.75-49.16-18.75-67.91 0l-56.55 56.55 128.02 128.02 56.55-56.55c18.75-18.76 18.75-49.16 0-67.91z"/></svg>
<span class="t" id="fr" style="left:393.20px;top:768.95px;font-size:14px;line-height:14px;font-weight:400;color:#0f1419;letter-spacing:0.32px;">thisIsARealFie...</span>
<span class="t" id="frt" style="left:511.00px;top:768.95px;font-size:14px;line-height:14px;font-weight:400;color:#0f1419;letter-spacing:0.5px;">timeline</span>
<span class="t" id="ff" style="left:363.00px;top:853.80px;font-size:13px;line-height:13px;font-weight:400;color:#5b7083;letter-spacing:0.21px;">n of N fields shown</span>
<svg class="abs" style="left:801px;top:854px" width="13" height="12" viewBox="0 0 13 12" fill="#1d9bf0"><rect x="0" y="0" width="3.8" height="3.5" rx="0.6"/><rect x="4.9" y="0" width="8.1" height="3.5" rx="0.6"/><rect x="0" y="4.25" width="3.8" height="3.5" rx="0.6"/><rect x="4.9" y="4.25" width="8.1" height="3.5" rx="0.6"/><rect x="0" y="8.5" width="3.8" height="3.5" rx="0.6"/><rect x="4.9" y="8.5" width="8.1" height="3.5" rx="0.6"/></svg>
<svg class="abs" style="left:829px;top:853px" width="20" height="15" viewBox="0 0 20 15" fill="none" stroke="#536471" stroke-width="1.8" stroke-linecap="round" stroke-linejoin="round"><path d="M2.7 2.9 L7.6 7.3 L2.7 11.7"/><path d="M9.3 11.8 H17.9" stroke-linecap="butt"/></svg>
<span class="t" id="af" style="left:877.60px;top:171.98px;font-size:24px;line-height:24px;font-weight:700;color:#0f1419;letter-spacing:0px;transform-origin:0 20.32px;transform:scaleX(1.08) rotate(0.03deg)">Add Field</span>
<div class="abs" style="left:1186px;top:172px;width:94px;height:24px;border:1px solid #ccd6dd;border-radius:12px;background:#fff"></div>
<span class="t" id="sd" style="left:1197.80px;top:177.10px;font-size:14.3px;line-height:14.3px;font-weight:700;color:#0f1419;letter-spacing:-0.15px;">Save Draft</span>
<div class="abs" style="left:1292px;top:172px;width:87px;height:24px;border-radius:12px;background:#0f1419"></div>
<span class="t" id="afb" style="left:1303.80px;top:177.10px;font-size:14.3px;line-height:14.3px;font-weight:700;color:#fff;letter-spacing:-0.4px;">Add Field</span>
<span class="t" id="l0" style="left:880.80px;top:220.00px;font-size:13px;line-height:13px;font-weight:400;color:#0f1419;letter-spacing:-0.1px;">Name<span style="font-size:9.5px;position:relative;top:-2.6px;letter-spacing:0;margin-left:0.3px">*</span></span>
<span class="t" id="l1" style="left:880.80px;top:296.00px;font-size:13px;line-height:13px;font-weight:400;color:#0f1419;letter-spacing:-0.2px;">Type<span style="font-size:9.5px;position:relative;top:-2.6px;letter-spacing:0;margin-left:0.3px">*</span></span>
<span class="t" id="l2" style="left:880.80px;top:372.00px;font-size:13px;line-height:13px;font-weight:400;color:#0f1419;letter-spacing:0.1px;">Description<span style="font-size:9.5px;position:relative;top:-2.6px;letter-spacing:0;margin-left:0.3px">*</span></span>
<span class="t" id="l3" style="left:880.80px;top:473.00px;font-size:13px;line-height:13px;font-weight:400;color:#0f1419;letter-spacing:0.1px;">Lifecycle<span style="font-size:9.5px;position:relative;top:-2.6px;letter-spacing:0;margin-left:0.3px">*</span></span>
<span class="t" id="l4" style="left:880.80px;top:549.30px;font-size:13px;line-height:13px;font-weight:400;color:#0f1419;letter-spacing:-0.15px;">PDP Jira Ticket Number</span>
<span class="t" id="l5" style="left:880.80px;top:625.30px;font-size:13px;line-height:13px;font-weight:400;color:#0f1419;letter-spacing:-0.13px;">Owning Team</span>
<span class="t" id="l6" style="left:880.80px;top:701.30px;font-size:13px;line-height:13px;font-weight:400;color:#0f1419;letter-spacing:0.04px;">Serialization Method</span>
<div class="inp" style="top:242px"></div>
<span class="t" id="v0" style="left:893.00px;top:252.40px;font-size:15px;line-height:15px;font-weight:400;color:#0f1419;letter-spacing:-0.12px;">thisIsARealFieldName_timeline</span>
<div class="inp" style="top:318px"></div>
<span class="t" id="v1" style="left:893.00px;top:328.40px;font-size:15px;line-height:15px;font-weight:400;color:#0f1419;letter-spacing:0.15px;">timeline</span>
<div class="inp" style="top:394px;height:61px"></div>
<span class="t" id="v2" style="left:892.80px;top:404.20px;font-size:15px;line-height:15px;font-weight:400;color:#0f1419;letter-spacing:0.1px;">Some description written about the field being added.</span>
<svg class="abs" style="left:1341px;top:442px" width="12" height="12" viewBox="0 0 12 12" stroke="#9aa7b1" stroke-width="1" fill="none"><path d="M2.5 9.8 L9.8 2.5 M6.3 10 L10 6.3"/></svg>
<div class="inp" style="top:495px"></div>
<span class="t" id="v3" style="left:893.00px;top:505.40px;font-size:15px;line-height:15px;font-weight:400;color:#0f1419;letter-spacing:0.1px;">development</span>
<svg class="abs" style="left:1326px;top:506px" width="16" height="13" viewBox="0 0 16 13" fill="none" stroke="#536471" stroke-width="1.5" stroke-linecap="round" stroke-linejoin="round"><path d="M2.6 3.7 L8 9.2 L13.4 3.7"/></svg>
<div class="inp dis" style="top:571px"></div>
<span class="t" id="p0" style="left:893.10px;top:581.40px;font-size:15px;line-height:15px;font-weight:400;color:#bfcdd6;letter-spacing:0.14px;">ticket number</span>
<div class="inp dis" style="top:647px"></div>
<span class="t" id="p1" style="left:893.10px;top:657.40px;font-size:15px;line-height:15px;font-weight:400;color:#bfcdd6;letter-spacing:0.2px;">team</span>
<div class="inp dis" style="top:723px"></div>
<span class="t" id="p2" style="left:892.60px;top:733.40px;font-size:15px;line-height:15px;font-weight:400;color:#bfcdd6;letter-spacing:0.35px;">method</span>
<span class="t" id="qp" style="left:877.90px;top:827.53px;font-size:23px;line-height:23px;font-weight:700;color:#0f1419;letter-spacing:0px;transform-origin:0 19.47px;transform:scaleX(1.0) rotate(0.03deg);-webkit-text-stroke:0.25px #0f1419">Query Preview</span>
<svg class="abs" style="left:1353px;top:832px" width="16" height="13" viewBox="0 0 16 13" fill="none" stroke="#0f1419" stroke-width="1.6" stroke-linecap="round" stroke-linejoin="round"><path d="M2.6 9.3 L8 3.9 L13.4 9.3"/></svg>
<div id="footer"></div>
<span class="t" id="foot1" style="left:998.80px;top:923.50px;font-size:15px;line-height:15px;font-weight:700;color:#0f1419;letter-spacing:-0.1px;">Don’t see what you need? Contact</span>
<span class="t" id="foot2" style="left:1244.80px;top:923.16px;font-size:15.4px;line-height:15.4px;font-weight:400;color:#1d9bf0;letter-spacing:0.1px;-webkit-text-stroke:0.3px #1d9bf0">XXXXXX</span>
<span class="t" id="foot3" style="left:1311.80px;top:923.50px;font-size:15px;line-height:15px;font-weight:700;color:#0f1419;letter-spacing:-0.1px;">for assistance.</span>
</div>
</body>
</html>
